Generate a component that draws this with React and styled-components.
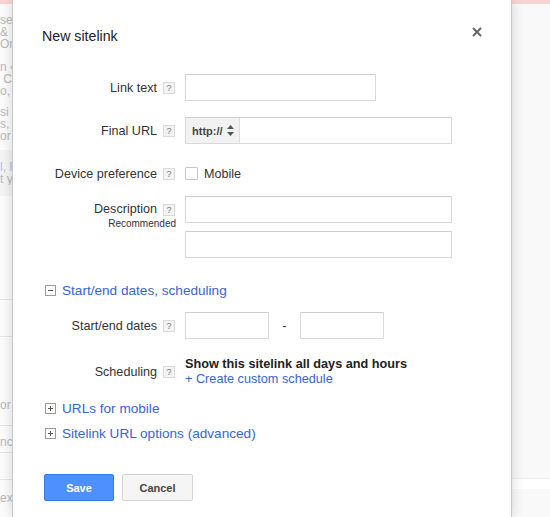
import React from "react";
import styled, { createGlobalStyle } from "styled-components";

const GlobalStyle = createGlobalStyle`
  body {
    margin: 0;
    font-family: "Liberation Sans", Arial, sans-serif;
    background: #fafafa;
  }
`;

const Page = styled.div`
  display: flex;
  height: 517px;
  overflow: hidden;
  background: #fafafa;
`;

const LeftStrip = styled.div`
  width: 12px;
  flex-shrink: 0;
  overflow: hidden;
  display: flex;
  flex-direction: column;
  background: #fcfcfc;
`;

const RightStrip = styled.div`
  flex: 1;
  display: flex;
  flex-direction: column;
  background: #f9f9f9;
`;

const PinkBar = styled.div`
  height: 4px;
  flex-shrink: 0;
  background: #f9d4d0;
`;

const StripGroup = styled.div`
  margin-top: ${(p) => p.$mt || 0}px;
  padding: ${(p) => p.$pad || 0}px 0;
  background: ${(p) => p.$bg || "transparent"};
  border-top: ${(p) => (p.$line ? "1px solid #e6e6e6" : "none")};
`;

const StripLine = styled.div`
  font-size: 12px;
  line-height: 12px;
  height: 12px;
  overflow: hidden;
  white-space: nowrap;
  color: ${(p) => p.$color || "#b8b8b8"};
`;

const BottomBand = styled.div`
  margin-top: auto;
  height: 38px;
  border-top: 1px solid #eeeeee;
  background: linear-gradient(#ffffff 0, #ffffff 10px, #f9f9f9 10px);
`;

const Dialog = styled.div`
  width: 500px;
  flex-shrink: 0;
  box-sizing: border-box;
  background: #fff;
  border-left: 1px solid #c9c9c9;
  border-right: 1px solid #c9c9c9;
  box-shadow: 0 0 12px rgba(0, 0, 0, 0.16);
  position: relative;
  z-index: 1;
  padding: 27px 29px 0 30px;
`;

const Header = styled.div`
  display: flex;
  justify-content: space-between;
  align-items: flex-start;
  height: 18px;
`;

const Title = styled.div`
  margin-left: -1px;
  font-size: 14.2px;
  line-height: 18px;
  color: #222;
`;

const CloseButton = styled.button`
  border: 0;
  padding: 0;
  background: none;
  width: 10px;
  height: 10px;
  display: flex;
  cursor: pointer;
`;

const Form = styled.div`
  margin-top: 29px;
  display: flex;
  flex-direction: column;
`;

const FieldRow = styled.div`
  display: grid;
  grid-template-columns: 114px 28px 1fr;
  align-items: ${(p) => (p.$top ? "start" : "center")};
  margin-top: ${(p) => p.$mt || 0}px;
  min-height: 27px;
`;

const Label = styled.div`
  text-align: right;
  font-size: 12.6px;
  line-height: 16px;
  color: #333;
  padding-top: ${(p) => p.$pt || 0}px;
`;

const SubLabel = styled.div`
  margin-right: -19px;
  font-size: 10px;
  line-height: 13px;
  color: #333;
`;

const Help = styled.span`
  width: 12px;
  height: 12px;
  margin-left: 6px;
  margin-top: ${(p) => p.$mt || 0}px;
  box-sizing: border-box;
  border: 1px solid #dadada;
  background: #f3f3f3;
  color: #777;
  font-size: 9px;
  line-height: 10px;
  display: flex;
  align-items: center;
  justify-content: center;
`;

const Field = styled.div`
  display: flex;
  flex-direction: ${(p) => (p.$column ? "column" : "row")};
  align-items: ${(p) => (p.$column ? "flex-start" : "center")};
  gap: ${(p) => p.$gap || 0}px;
`;

const TextInput = styled.input`
  width: ${(p) => p.$w}px;
  height: 27px;
  box-sizing: border-box;
  border: 1px solid #d9d9d9;
  border-top-color: #cecece;
  border-radius: 1px;
  padding: 0 8px;
  font-family: inherit;
  font-size: 13px;
  outline: none;
`;

const UrlBox = styled.div`
  width: 267px;
  height: 27px;
  box-sizing: border-box;
  display: flex;
  border: 1px solid #d9d9d9;
  border-top-color: #cecece;
  border-radius: 1px;
`;

const Protocol = styled.div`
  width: 54px;
  flex-shrink: 0;
  box-sizing: border-box;
  display: flex;
  align-items: center;
  justify-content: space-between;
  padding: 0 5px 0 6px;
  background: #f2f2f2;
  border-right: 1px solid #dedede;
  font-size: 11px;
  font-weight: bold;
  color: #444;
`;

const UrlInput = styled.input`
  flex: 1;
  min-width: 0;
  border: 0;
  padding: 0 8px;
  font-family: inherit;
  font-size: 13px;
  outline: none;
`;

const Checkbox = styled.span`
  width: 13px;
  height: 13px;
  box-sizing: border-box;
  border: 1px solid #c6c6c6;
  border-radius: 1px;
  background: #fff;
`;

const CheckLabel = styled.span`
  margin-left: 6px;
  font-size: 12.6px;
  color: #333;
`;

const Dash = styled.span`
  width: 31px;
  text-align: center;
  font-size: 13px;
  color: #333;
`;

const Toggle = styled.div`
  display: flex;
  align-items: center;
  height: 20px;
  margin-top: ${(p) => p.$mt || 0}px;
  padding-left: 2px;
  gap: 6px;
  font-size: 13.6px;
  color: #3a63d0;
  cursor: pointer;
`;

const ScheduleText = styled.div`
  font-size: 12.7px;
  line-height: 15px;
  font-weight: ${(p) => (p.$bold ? "bold" : "normal")};
  color: ${(p) => (p.$link ? "#3a63d0" : "#222")};
`;

const Actions = styled.div`
  display: flex;
  gap: 8px;
  margin-top: 31px;
  padding-left: 1px;
`;

const Button = styled.button`
  width: ${(p) => p.$w}px;
  height: 27px;
  box-sizing: border-box;
  border-radius: 2px;
  font-family: inherit;
  font-size: 11px;
  font-weight: bold;
  cursor: pointer;
  border: 1px solid ${(p) => (p.$primary ? "#3079ed" : "#d4d4d4")};
  background: ${(p) => (p.$primary ? "#4d90fe" : "#f5f5f5")};
  color: ${(p) => (p.$primary ? "#fff" : "#444")};
`;

const CloseIcon = () => (
  <svg width="10" height="10" viewBox="0 0 10 10">
    <path d="M1 1l8 8M9 1L1 9" stroke="#666" strokeWidth="2" />
  </svg>
);

const SortArrows = () => (
  <svg width="7" height="11" viewBox="0 0 7 11">
    <path d="M3.5 0L7 4H0z M0 7h7L3.5 11z" fill="#555" />
  </svg>
);

const BoxIcon = ({ open }) => (
  <svg width="11" height="11" viewBox="0 0 11 11">
    <rect x="0.5" y="0.5" width="10" height="10" fill="#fff" stroke="#9a9a9a" />
    <path d="M3 5.5h5" stroke="#555" />
    {!open && <path d="M5.5 3v5" stroke="#555" />}
  </svg>
);

const HelpMark = ({ mt }) => <Help $mt={mt}>?</Help>;

function Backdrop() {
  return (
    <LeftStrip aria-hidden="true">
      <PinkBar />
      <StripGroup $mt={10}>
        <StripLine>se</StripLine>
        <StripLine>&amp; .</StripLine>
        <StripLine>Or</StripLine>
      </StripGroup>
      <StripGroup $mt={11}>
        <StripLine>n «</StripLine>
        <StripLine>&nbsp;C</StripLine>
        <StripLine>o, C</StripLine>
      </StripGroup>
      <StripGroup $mt={9}>
        <StripLine>si</StripLine>
        <StripLine>s, E</StripLine>
        <StripLine>or</StripLine>
      </StripGroup>
      <StripGroup $mt={8} $pad={11} $bg="#f4f4f4">
        <StripLine $color="#b3c0e6">l, F</StripLine>
        <StripLine>t y</StripLine>
      </StripGroup>
      <StripGroup $mt={103} $line />
      <StripGroup $mt={36} $line />
      <StripGroup $mt={62}>
        <StripLine>or</StripLine>
      </StripGroup>
      <StripGroup $mt={14} $line />
      <StripGroup $mt={10}>
        <StripLine>nc</StripLine>
      </StripGroup>
      <StripGroup $mt={4} $line />
      <StripGroup $mt={26} $line />
      <StripGroup $mt={12}>
        <StripLine>ex</StripLine>
      </StripGroup>
    </LeftStrip>
  );
}

export default function App() {
  return (
    <>
      <GlobalStyle />
      <Page>
        <Backdrop />
        <Dialog>
          <Header>
            <Title>New sitelink</Title>
            <CloseButton aria-label="Close">
              <CloseIcon />
            </CloseButton>
          </Header>

          <Form>
            <FieldRow>
              <Label>Link text</Label>
              <HelpMark />
              <Field>
                <TextInput $w={191} />
              </Field>
            </FieldRow>

            <FieldRow $mt={16}>
              <Label>Final URL</Label>
              <HelpMark />
              <Field>
                <UrlBox>
                  <Protocol>
                    http://
                    <SortArrows />
                  </Protocol>
                  <UrlInput />
                </UrlBox>
              </Field>
            </FieldRow>

            <FieldRow $mt={16}>
              <Label>Device preference</Label>
              <HelpMark />
              <Field>
                <Checkbox />
                <CheckLabel>Mobile</CheckLabel>
              </Field>
            </FieldRow>

            <FieldRow $mt={9} $top>
              <Label $pt={5}>
                Description
                <SubLabel>Recommended</SubLabel>
              </Label>
              <HelpMark mt={8} />
              <Field $column $gap={8}>
                <TextInput $w={267} />
                <TextInput $w={267} />
              </Field>
            </FieldRow>

            <Toggle $mt={22}>
              <BoxIcon open />
              Start/end dates, scheduling
            </Toggle>

            <FieldRow $mt={12}>
              <Label>Start/end dates</Label>
              <HelpMark />
              <Field>
                <TextInput $w={84} />
                <Dash>-</Dash>
                <TextInput $w={84} />
              </Field>
            </FieldRow>

            <FieldRow $mt={18}>
              <Label>Scheduling</Label>
              <HelpMark />
              <Field $column>
                <ScheduleText $bold>Show this sitelink all days and hours</ScheduleText>
                <ScheduleText $link>+ Create custom schedule</ScheduleText>
              </Field>
            </FieldRow>

            <Toggle $mt={11}>
              <BoxIcon />
              URLs for mobile
            </Toggle>

            <Toggle $mt={5}>
              <BoxIcon />
              Sitelink URL options (advanced)
            </Toggle>
          </Form>

          <Actions>
            <Button $primary $w={70}>Save</Button>
            <Button $w={71}>Cancel</Button>
          </Actions>
        </Dialog>
        <RightStrip>
          <PinkBar />
          <BottomBand />
        </RightStrip>
      </Page>
    </>
  );
}
